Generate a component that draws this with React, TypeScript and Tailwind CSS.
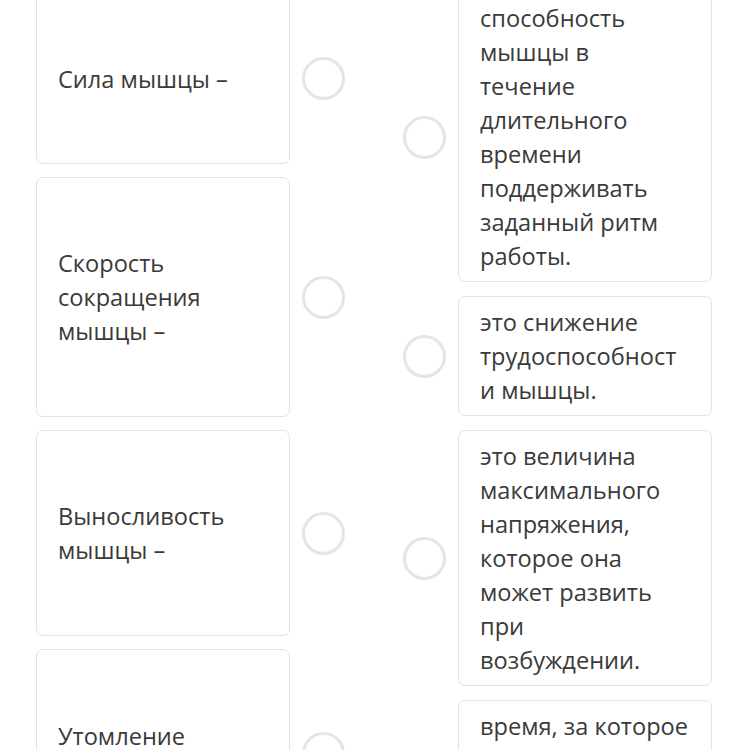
import React from "react";

const leftItems = [
  { text: "Сила мышцы –", h: "h-[171px]" },
  { text: "Скорость сокращения мышцы –", h: "h-[240px]" },
  { text: "Выносливость мышцы –", h: "h-[206px]" },
  { text: "Утомление мышцы –", h: "h-[208px]" },
];

const rightItems = [
  "способность мышцы в течение длительного времени поддерживать заданный ритм работы.",
  "это снижение трудоспособности мышцы.",
  "это величина максимального напряжения, которое она может развить при возбуждении.",
  "время, за которое мышца сокращается в ответ на раздражение.",
];

function Circle() {
  return (
    <div className="w-[43px] h-[43px] shrink-0 rounded-full border-[3px] border-[#e2e5ea] bg-white" />
  );
}

export default function App() {
  return (
    <div
      className="h-[750px] w-[748px] overflow-hidden bg-white text-[#3a3a3a]"
      style={{ fontFamily: '"Open Sans", "Noto Sans", sans-serif' }}
    >
      <div className="flex items-start gap-[58px] pl-[36px] -mt-[8px]">
        {/* Left column */}
        <div className="flex flex-col gap-[13px] pt-px">
          {leftItems.map((item) => (
            <div key={item.text} className="flex items-center gap-[12px]">
              <div
                className={`flex items-center w-[254px] ${item.h} px-[21px] rounded-[7px] border border-[#e2e2e2] text-[23.6px] leading-[34px]`}
              >
                {item.text}
              </div>
              <Circle />
            </div>
          ))}
        </div>

        {/* Right column */}
        <div className="flex flex-col gap-[14px]">
          {rightItems.map((text) => (
            <div key={text} className="flex items-center gap-[12px]">
              <Circle />
              <div className="w-[254px] px-[21px] py-[8px] rounded-[7px] border border-[#e2e2e2] text-[23.6px] leading-[34px] break-words">
                {text}
              </div>
            </div>
          ))}
        </div>
      </div>
    </div>
  );
}
